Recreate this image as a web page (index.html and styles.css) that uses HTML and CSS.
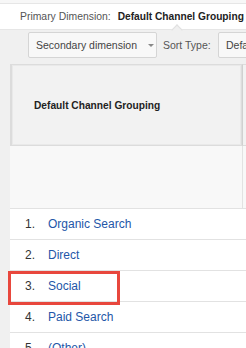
FILE: index.html
```html
<!DOCTYPE html>
<html lang="en">
<head>
    <meta charset="UTF-8">
    <meta name="viewport" content="width=device-width, initial-scale=1.0">
    <title>Default Channel Grouping</title>
    <link rel="stylesheet" href="styles.css">
</head>
<body>
    <div class="top-strip"></div>
    <div class="primary-bar">
        <span class="primary-label">Primary Dimension:</span>
        <span class="primary-value">Default Channel Grouping</span>
        <span class="notch"></span>
    </div>
    <div class="controls">
        <button type="button" class="select-btn">Secondary dimension <span class="caret"></span></button>
        <span class="sort-label">Sort Type:</span>
        <button type="button" class="sort-btn">Default</button>
    </div>

    <div class="report">
        <div class="report-table">
            <div class="head-row">
                <div class="head-cell">Default Channel Grouping</div>
                <div class="head-next"></div>
            </div>
            <div class="total-row">
                <div class="total-cell"></div>
                <div class="total-next"></div>
            </div>
            <div class="data-row">
                <span class="num">1.</span><a href="#" class="name">Organic Search</a>
            </div>
            <div class="data-row">
                <span class="num">2.</span><a href="#" class="name">Direct</a>
            </div>
            <div class="data-row">
                <span class="num">3.</span><a href="#" class="name">Social</a>
                <span class="highlight"></span>
            </div>
            <div class="data-row">
                <span class="num">4.</span><a href="#" class="name">Paid Search</a>
            </div>
            <div class="data-row">
                <span class="num">5.</span><a href="#" class="name">(Other)</a>
            </div>
        </div>
    </div>
</body>
</html>
```

FILE: styles.css
```css
body {
    font-family: Arial, "Liberation Sans", sans-serif;
    margin: 0;
    padding: 0;
    background-color: #f0f0f0;
    color: #444;
    overflow: hidden;
    height: 348px;
}
.top-strip {
    height: 3px;
    background-color: #f7f7f7;
}
.primary-bar {
    position: relative;
    background-color: #fff;
    border-top: 1px solid #e6e6e6;
    border-bottom: 1px solid #e6e6e6;
    height: 25px;
    padding-left: 20px;
    display: flex;
    align-items: center;
    font-size: 10.4px;
    white-space: nowrap;
}
.primary-label {
    color: #555;
    margin-right: 7px;
}
.primary-value {
    color: #222;
    font-weight: bold;
    font-size: 10.2px;
}
.notch {
    position: absolute;
    left: 173px;
    bottom: -5px;
    width: 7px;
    height: 7px;
    background-color: #f0f0f0;
    border-left: 1px solid #e0e0e0;
    border-top: 1px solid #e0e0e0;
    transform: rotate(45deg);
}
.controls {
    display: flex;
    align-items: center;
    padding: 2px 0 0 28px;
    height: 26px;
    white-space: nowrap;
}
.select-btn,
.sort-btn {
    font-family: inherit;
    font-size: 10.5px;
    color: #444;
    background-color: #f8f8f8;
    border: 1px solid #d5d5d5;
    border-radius: 2px;
    height: 26px;
    padding: 0 7px;
    display: flex;
    align-items: center;
}
.select-btn {
    width: 129px;
    flex-shrink: 0;
}
.caret {
    margin-left: 11px;
    border-left: 3px solid transparent;
    border-right: 3px solid transparent;
    border-top: 3px solid #888;
}
.sort-label {
    font-size: 10.5px;
    color: #555;
    margin: 0 0 0 6px;
    width: 55px;
    flex-shrink: 0;
}
.sort-btn {
    width: 60px;
    flex-shrink: 0;
}
.report {
    margin-top: 6px;
    padding-left: 10px;
}
.report-table {
    width: 300px;
    background-color: #fff;
}
.head-row {
    display: flex;
    height: 82px;
}
.head-cell {
    width: 207px;
    background-color: #f2f2f2;
    border: 1px solid #dcdcdc;
    border-left-width: 2px;
    box-shadow: inset 0 0 0 1px #e9e9e9;
    display: flex;
    align-items: center;
    padding-left: 22px;
    font-size: 10.2px;
    font-weight: bold;
    color: #222;
}
.head-next {
    flex: 1;
    background-color: #f2f2f2;
    border: 1px solid #dcdcdc;
    border-left-color: #d0d0d0;
}
.total-row {
    display: flex;
    height: 62px;
    border-bottom: 1px solid #e2e2e2;
}
.total-cell {
    width: 232px;
    background-color: #f8f8f8;
}
.total-next {
    flex: 1;
    background-color: #f8f8f8;
    border-left: 1px solid #e2e2e2;
}
.data-row {
    position: relative;
    height: 30px;
    border-bottom: 1px solid #e2e2e2;
    display: flex;
    align-items: center;
    font-size: 12px;
}
.num {
    color: #333;
    width: 23px;
    padding-left: 15px;
}
.name {
    color: #2356a8;
    text-decoration: none;
}
.highlight {
    position: absolute;
    left: -2px;
    top: 0;
    width: 106px;
    height: 28px;
    border: 3px solid #e8473d;
}
```
